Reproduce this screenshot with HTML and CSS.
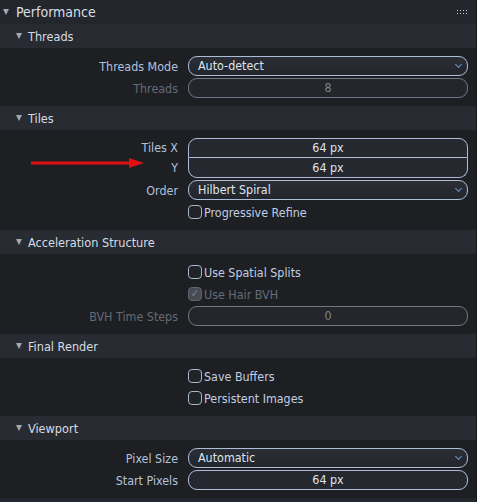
FILE: index.html
```html
<!DOCTYPE html>
<html lang="en">
<head>
    <meta charset="UTF-8">
    <title>Performance</title>
    <link rel="stylesheet" href="styles.css">
</head>
<body>

    <div class="props">
        <div class="panel-head">
            <span class="tri"></span>Performance
            <svg class="grip" width="11" height="5" viewBox="0 0 11 5">
                <g fill="#c9ced6">
                    <rect x="0" y="0" width="1" height="1"/><rect x="3" y="0" width="1" height="1"/>
                    <rect x="6" y="0" width="1" height="1"/><rect x="9" y="0" width="1" height="1"/>
                    <rect x="0" y="3" width="1" height="1"/><rect x="3" y="3" width="1" height="1"/>
                    <rect x="6" y="3" width="1" height="1"/><rect x="9" y="3" width="1" height="1"/>
                </g>
            </svg>
        </div>

        <!-- Threads -->
        <div class="sub-head"><span class="tri"></span>Threads</div>
        <div class="sub-body">
            <div class="row">
                <span class="lbl">Threads Mode</span>
                <div class="field menu">Auto-detect<span class="chev"></span></div>
            </div>
            <div class="row dim">
                <span class="lbl">Threads</span>
                <div class="field num">8</div>
            </div>
        </div>

        <!-- Tiles -->
        <div class="sub-head"><span class="tri"></span>Tiles</div>
        <div class="sub-body">
            <div class="row pair">
                <div class="lbl-col">
                    <span class="lbl">Tiles X</span>
                    <span class="lbl">Y</span>
                </div>
                <div class="stack">
                    <div class="field num top">64 px</div>
                    <div class="field num bottom">64 px</div>
                </div>
            </div>
            <div class="row">
                <span class="lbl">Order</span>
                <div class="field menu">Hilbert Spiral<span class="chev"></span></div>
            </div>
            <div class="row">
                <span class="lbl"></span>
                <label class="check"><span class="box"></span>Progressive Refine</label>
            </div>
        </div>

        <!-- Acceleration Structure -->
        <div class="sub-head"><span class="tri"></span>Acceleration Structure</div>
        <div class="sub-body">
            <div class="row">
                <span class="lbl"></span>
                <label class="check"><span class="box"></span>Use Spatial Splits</label>
            </div>
            <div class="row dim">
                <span class="lbl"></span>
                <label class="check"><span class="box on">&#10003;</span>Use Hair BVH</label>
            </div>
            <div class="row dim">
                <span class="lbl">BVH Time Steps</span>
                <div class="field num">0</div>
            </div>
        </div>

        <!-- Final Render -->
        <div class="sub-head"><span class="tri"></span>Final Render</div>
        <div class="sub-body">
            <div class="row">
                <span class="lbl"></span>
                <label class="check"><span class="box"></span>Save Buffers</label>
            </div>
            <div class="row">
                <span class="lbl"></span>
                <label class="check"><span class="box"></span>Persistent Images</label>
            </div>
        </div>

        <!-- Viewport -->
        <div class="sub-head"><span class="tri"></span>Viewport</div>
        <div class="sub-body">
            <div class="row">
                <span class="lbl">Pixel Size</span>
                <div class="field menu">Automatic<span class="chev"></span></div>
            </div>
            <div class="row">
                <span class="lbl">Start Pixels</span>
                <div class="field num">64 px</div>
            </div>
        </div>
        <div class="next-head"></div>

        <!-- annotation arrow -->
        <svg class="arrow" width="113" height="12" viewBox="0 0 113 12">
            <rect x="0" y="4.5" width="101" height="3" fill="#e01010"/>
            <polygon points="98,1 113,6 98,11" fill="#e01010"/>
        </svg>
    </div>

</body>
</html>
```

FILE: styles.css
```css
body {
    margin: 0;
    background: #1d1f23;
    font-family: "DejaVu Sans Condensed", "DejaVu Sans", sans-serif;
    font-size: 12.4px;
    color: #dde3ec;
}
.props {
    position: relative;
    width: 476px;
    height: 502px;
    border-right: 1px solid #17191c;
    overflow: hidden;
}
.panel-head {
    position: relative;
    display: flex;
    align-items: center;
    height: 24px;
    padding-left: 3px;
    background: #23262c;
    font-size: 14px;
    color: #dadee5;
}
.panel-head .tri {
    margin-right: 7px;
}
.grip {
    position: absolute;
    right: 8px;
    top: 10px;
}
.sub-head {
    display: flex;
    align-items: center;
    height: 24px;
    padding-left: 16px;
    background: #282b31;
    font-size: 12.6px;
    color: #d6dbe2;
}
.sub-head .tri {
    margin-right: 6px;
}
.tri {
    width: 0;
    height: 0;
    border-left: 3px solid transparent;
    border-right: 3px solid transparent;
    border-top: 6px solid #a2a8b0;
}
.sub-body {
    display: flex;
    flex-direction: column;
    gap: 2px;
    padding: 8px 8px 8px 0;
}
.row {
    display: flex;
    align-items: center;
    min-height: 20px;
}
.lbl {
    width: 178px;
    padding-right: 10px;
    text-align: right;
    color: #b3c2dc;
    flex-shrink: 0;
}
.dim .lbl {
    color: #646b76;
}
.field {
    position: relative;
    flex: 1;
    height: 18px;
    line-height: 18px;
    border: 1px solid #adbdd9;
    border-radius: 9px;
    background: #25282e;
    color: #dfe4ec;
}
.menu {
    padding-left: 9px;
    background: linear-gradient(#2b2e35, #22252b);
}
.num {
    text-align: center;
}
.dim .field {
    border-color: #6f7784;
    background: #23262b;
    color: #7c838e;
}
.chev {
    position: absolute;
    right: 6px;
    top: 5px;
    width: 4px;
    height: 4px;
    border-right: 1.5px solid #6d8fcc;
    border-bottom: 1.5px solid #6d8fcc;
    transform: rotate(45deg);
}
.pair {
    align-items: stretch;
}
.lbl-col {
    display: flex;
    flex-direction: column;
}
.lbl-col .lbl {
    height: 20px;
    line-height: 20px;
}
.stack {
    flex: 1;
    display: flex;
    flex-direction: column;
}
.stack .field {
    flex: none;
}
.stack .top {
    border-radius: 9px 9px 0 0;
}
.stack .bottom {
    border-top: none;
    height: 19px;
    line-height: 19px;
    border-radius: 0 0 9px 9px;
}
.check {
    display: flex;
    align-items: center;
    color: #c1cee4;
}
.dim .check {
    color: #656c77;
}
.box {
    width: 12px;
    height: 12px;
    margin-right: 2px;
    border: 1px solid #aab6c8;
    border-radius: 4px;
    background: #202328;
    font-size: 11px;
    line-height: 12px;
    text-align: center;
}
.box.on {
    border-color: #5d646e;
    background: #474c54;
    color: #7b828c;
}
.next-head {
    height: 10px;
    background: #23262c;
}
.arrow {
    position: absolute;
    left: 31px;
    top: 157px;
}
```
